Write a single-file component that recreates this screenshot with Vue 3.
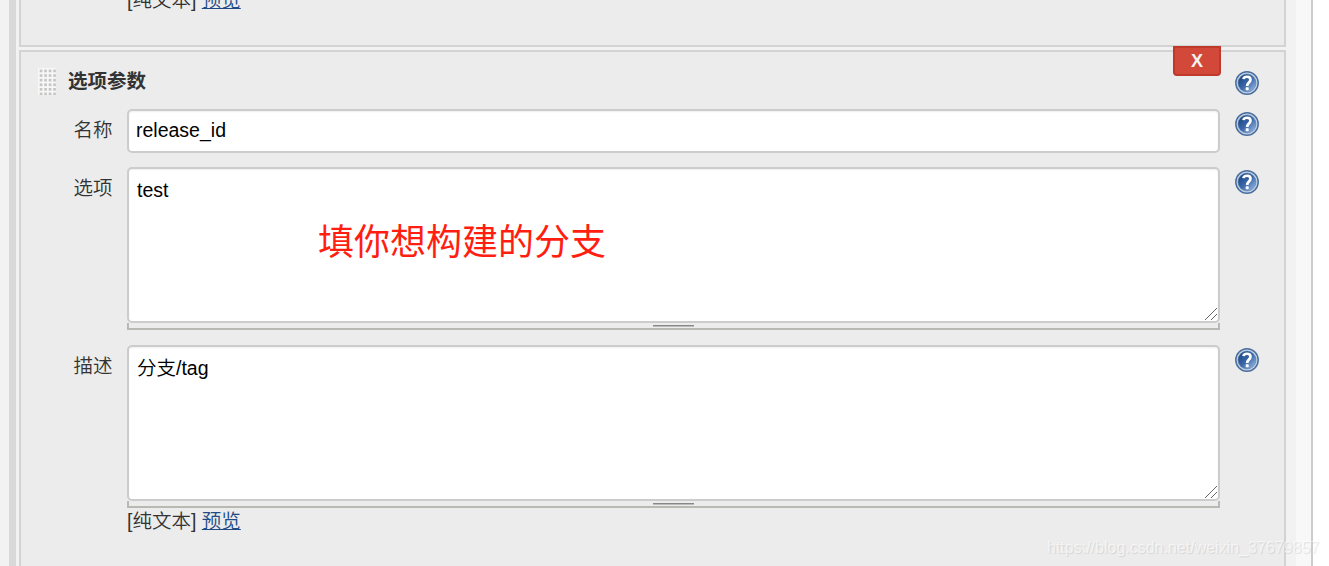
<template>
  <div class="page">
    <div class="side-gutter"></div>
    <div class="side-bar"></div>
    <main class="config">
      <section class="panel panel-previous">
        <div class="preview-line">[纯文本] <a href="#" class="preview-link">预览</a></div>
      </section>

      <section class="panel panel-current">
        <button class="delete-btn" type="button">X</button>

        <div class="panel-header">
          <svg class="drag-handle" width="18" height="27" viewBox="0 0 18 27">
            <rect width="18" height="27" fill="#f7f7f7" />
            <template v-for="row in 6" :key="row">
              <rect
                v-for="col in 4"
                :key="col"
                :x="col * 4.5 - 2.8"
                :y="row * 4.6 - 3"
                width="2.7"
                height="2.7"
                fill="#c6c6c4"
              />
            </template>
          </svg>
          <span class="panel-title">选项参数</span>
          <svg class="help-icon" viewBox="0 0 24 24"><use href="#help-glyph" /></svg>
        </div>

        <div v-for="field in fields" :key="field.label" class="row">
          <label class="row-label">{{ field.label }}</label>
          <div class="row-field">
            <input v-if="field.type === 'text'" v-model="field.value" class="text-input" type="text" />
            <template v-else>
              <div class="area-wrap">
                <textarea v-model="field.value" class="text-area" spellcheck="false"></textarea>
                <svg class="resizer" width="12" height="12" viewBox="0 0 12 12">
                  <path d="M0 12 L12 0 M6 12 L12 6" stroke="#555" stroke-width="0.9" />
                </svg>
                <span v-if="field.note" class="note">{{ field.note }}</span>
              </div>
              <div class="area-handle"><span class="area-grip"></span></div>
            </template>
            <div v-if="field.preview" class="preview-line">
              [纯文本] <a href="#" class="preview-link">预览</a>
            </div>
          </div>
          <svg class="help-icon" viewBox="0 0 24 24"><use href="#help-glyph" /></svg>
        </div>
      </section>
    </main>
    <div class="page-edge"></div>

    <div class="watermark">https://blog.csdn.net/weixin_37679857</div>

    <svg class="defs" width="0" height="0">
      <defs>
        <linearGradient id="help-fill" x1="0" y1="0" x2="1" y2="1">
          <stop offset="0.15" stop-color="#204a87" />
          <stop offset="0.5" stop-color="#3a67a8" />
          <stop offset="0.9" stop-color="#8fb3e0" />
        </linearGradient>
        <symbol id="help-glyph" viewBox="0 0 24 24">
          <circle cx="12" cy="12" r="11.2" fill="#c3d2e6" stroke="#4a6f9f" stroke-width="1.5" />
          <circle cx="12" cy="12" r="9" fill="url(#help-fill)" stroke="#52779f" stroke-width="0.5" />
          <path
            d="M8.5 8.2 C8.8 5 15.5 4.8 15.5 8.6 C15.5 11.6 12.2 11.6 12.2 15"
            fill="none"
            stroke="#fff"
            stroke-width="2.7"
          />
          <rect x="10.7" y="16.2" width="3" height="3" rx="0.6" fill="#fff" />
        </symbol>
      </defs>
    </svg>
  </div>
</template>

<script setup>
import { reactive } from 'vue'

const fields = reactive([
  { label: '名称', type: 'text', value: 'release_id' },
  { label: '选项', type: 'area', value: 'test', note: '填你想构建的分支' },
  { label: '描述', type: 'area', value: '分支/tag', preview: true }
])
</script>

<style>
body {
  margin: 0;
  overflow: hidden;
}
</style>

<style scoped>
.page {
  position: relative;
  display: flex;
  height: 566px;
  overflow: hidden;
  background: #fff;
  color: #333;
  font-family: "Liberation Sans", "Noto Sans CJK SC", sans-serif;
  font-size: 19.5px;
  font-weight: 350;
}

.side-gutter {
  width: 9px;
  background: #f2f2f2;
}

.side-bar {
  width: 7px;
  background: #d9d9d9;
}

.config {
  box-sizing: border-box;
  width: 1280px;
  padding: 0 10px 0 3px;
  background: #f2f2f2;
}

.page-edge {
  width: 15px;
  background: #f8f8f8;
  border-right: 2px solid #ccc;
}

.panel {
  display: flow-root;
  box-sizing: border-box;
  width: 1267px;
  border: 2px solid #d3d3d3;
  background: #ececec;
}

.panel-previous {
  height: 47px;
  margin-bottom: 3px;
  padding-left: 106px;
  border-top: none;
}

.panel-previous .preview-line {
  margin-top: -13px;
}

.panel-current {
  position: relative;
  height: 530px;
}

.delete-btn {
  position: absolute;
  top: -6px;
  right: 63px;
  width: 48px;
  height: 30px;
  padding: 0;
  border: 2px solid #bf3a2b;
  border-radius: 0 0 4px 4px;
  background: #d24939;
  color: #f4f4f4;
  font: bold 18px/26px "Liberation Sans", Arial, sans-serif;
}

.panel-header {
  display: flex;
  box-sizing: border-box;
  height: 57px;
  padding: 16px 25px 0 17px;
}

.panel-title {
  flex: 1;
  margin-left: 12px;
  line-height: 27px;
  font-weight: bold;
}

.row {
  display: flex;
  align-items: flex-start;
  margin-bottom: 14px;
}

.row + .row + .row {
  margin-top: 15px;
}

.row-label {
  box-sizing: border-box;
  width: 106px;
  padding-right: 14.5px;
  line-height: 43px;
  text-align: right;
}

.row-field {
  width: 1093px;
}

.help-icon {
  width: 24px;
  height: 24px;
  margin: 3px 0 0 15px;
}

.text-input,
.text-area {
  display: block;
  box-sizing: border-box;
  width: 100%;
  border: 2px solid #ccc;
  border-radius: 5px;
  background: #fff;
  box-shadow: inset 0 1px 2px rgba(0, 0, 0, 0.07);
  color: #000;
  font: inherit;
  outline: none;
}

.text-input {
  height: 44px;
  padding: 0 7px 2px;
}

.text-area {
  height: 156px;
  padding: 6px 8px;
  line-height: 30px;
  resize: none;
}

.area-wrap {
  position: relative;
}

.resizer {
  position: absolute;
  right: 3px;
  bottom: 3px;
}

.note {
  position: absolute;
  top: 50px;
  left: 191px;
  color: #ff1e10;
  font-size: 36px;
  font-weight: 400;
  line-height: 52px;
}

.area-handle {
  display: flex;
  justify-content: center;
  box-sizing: border-box;
  height: 7px;
  border: 2px solid #b9b9b3;
  border-top: none;
}

.area-grip {
  width: 41px;
  height: 1px;
  margin: 2px 1px 0 0;
  border-bottom: 1px solid #bbb;
  background: #888;
}

.preview-line {
  line-height: 27px;
}

.preview-link {
  color: #204a87;
  text-decoration: underline;
}

.watermark {
  position: absolute;
  top: 538px;
  left: 1047px;
  color: rgba(255, 255, 255, 0.6);
  font-size: 16px;
  line-height: 20px;
  text-shadow: 1px 1px 1px rgba(0, 0, 0, 0.1);
  white-space: nowrap;
}

.defs {
  position: absolute;
}
</style>
